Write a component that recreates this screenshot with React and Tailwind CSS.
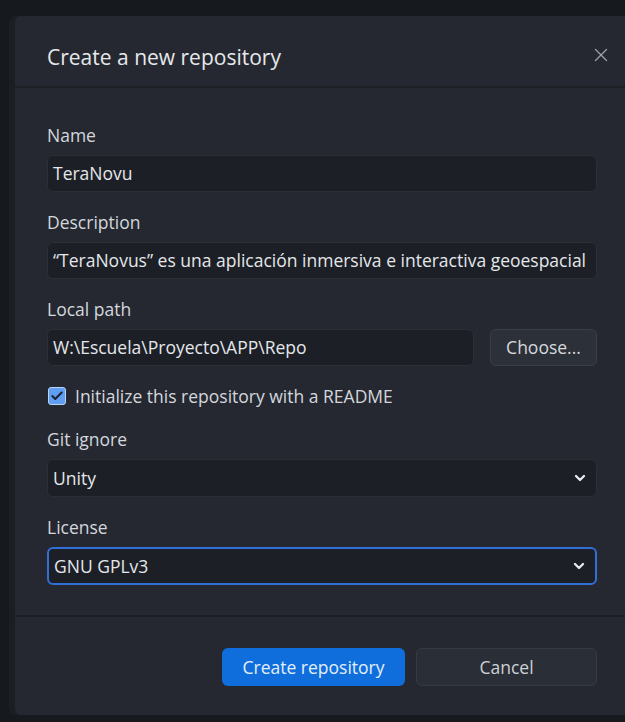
import { X, ChevronDown, Check } from 'lucide-react';

const FONT = { fontFamily: '"Open Sans", "Noto Sans", sans-serif' };

function FieldLabel({ children }) {
  return (
    <div className="h-5 leading-5 text-[17.5px] text-[#d3d7dd] mb-[10px]">{children}</div>
  );
}

function TextField({ value, className = '' }) {
  return (
    <div
      className={`h-[37px] flex items-center px-[5px] rounded-md bg-[#1c1f25] border border-[#2a2e35] text-[17.5px] text-[#e4e7eb] whitespace-nowrap overflow-hidden ${className}`}
    >
      {value}
    </div>
  );
}

function SelectField({ value, focused }) {
  return (
    <div
      className={`h-[38px] flex items-center justify-between pl-[5px] pr-[8px] rounded-md bg-[#1c1f25] text-[17.5px] text-[#e4e7eb] ${
        focused ? 'border-2 border-[#2f6fd6]' : 'border border-[#2a2e35]'
      }`}
    >
      <span>{value}</span>
      <ChevronDown size={16} strokeWidth={3.5} className="text-[#e8eaee]" />
    </div>
  );
}

export default function App() {
  return (
    <div
      className="w-[625px] h-[722px] bg-[#16191d] pt-4 pl-[15px] overflow-hidden"
      style={FONT}
    >
      <div className="w-[610px] h-[699px] bg-[#252830] rounded-l-md flex flex-col shadow-[-6px_0_0_#1b1e22]">
        {/* header */}
        <div className="h-[72px] flex items-start justify-between pl-8 pr-[13px] pt-[27px] border-b-2 border-[#1c1f24]">
          <h1 className="text-[21px] leading-[28px] text-[#e6e8eb]">Create a new repository</h1>
          <X size={22} strokeWidth={1.4} className="text-[#9ba1a9] mt-[1px]" />
        </div>

        {/* form */}
        <div className="pl-8 pr-7 pt-[37px] pb-[30px] flex flex-col">
          <FieldLabel>Name</FieldLabel>
          <TextField value="TeraNovu" className="mb-5" />

          <FieldLabel>Description</FieldLabel>
          <TextField
            value="“TeraNovus” es una aplicación inmersiva e interactiva geoespacial"
            className="mb-5"
          />

          <FieldLabel>Local path</FieldLabel>
          <div className="flex gap-4 mb-5">
            <TextField value="W:\Escuela\Proyecto\APP\Repo" className="flex-1" />
            <button className="w-[107px] h-[37px] rounded-md bg-[#2c3038] border border-[#393d45] text-[17.5px] text-[#d6d9de]">
              Choose...
            </button>
          </div>

          <label className="flex items-center gap-[9px] h-5 mb-[23px] pl-[1px]">
            <span className="w-[18px] h-[18px] rounded-[3px] bg-[#5f9ef0] border border-[#b9d3f5] flex items-center justify-center">
              <Check size={14} strokeWidth={3.5} className="text-[#1a2533]" />
            </span>
            <span className="text-[17.5px] text-[#d3d7dd]">Initialize this repository with a README</span>
          </label>

          <FieldLabel>Git ignore</FieldLabel>
          <div className="mb-5">
            <SelectField value="Unity" />
          </div>

          <FieldLabel>License</FieldLabel>
          <SelectField value="GNU GPLv3" focused />
        </div>

        {/* footer */}
        <div className="border-t-2 border-[#1c1f24] flex-1 flex justify-end items-start gap-[11px] pr-7 pt-[31px]">
          <button className="w-[183px] h-[38px] rounded-md bg-[#0f6edc] text-[17.5px] text-[#e3eefb]">
            Create repository
          </button>
          <button className="w-[181px] h-[38px] rounded-md bg-[#2a2e36] border border-[#363a42] text-[17.5px] text-[#cdd1d6]">
            Cancel
          </button>
        </div>
      </div>
    </div>
  );
}
